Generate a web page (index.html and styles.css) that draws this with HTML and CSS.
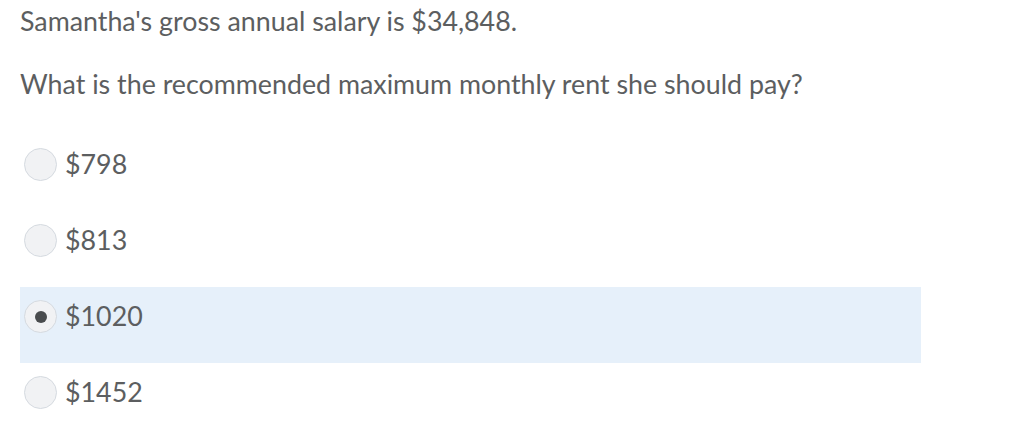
FILE: index.html
```html
<!DOCTYPE html>
<html>
<head>
<meta charset="utf-8">
<link rel="stylesheet" href="styles.css">
</head>
<body>
<div class="question">
  <p class="stem">Samantha's gross annual salary is $34,848.</p>
  <p class="stem">What is the recommended maximum monthly rent she should pay?</p>
  <div class="options">
    <label class="option"><span class="radio"></span><span class="label">$798</span></label>
    <label class="option"><span class="radio"></span><span class="label">$813</span></label>
    <label class="option selected"><span class="radio checked"></span><span class="label">$1020</span></label>
    <label class="option"><span class="radio"></span><span class="label">$1452</span></label>
  </div>
</div>
</body>
</html>
```
FILE: styles.css
```css
html, body {
  margin: 0;
  padding: 0;
  background: #ffffff;
}
body {
  font-family: Lato, "Liberation Sans", sans-serif;
  font-weight: 400;
  color: #5c5e60;
}
.question {
  padding: 0 0 0 20px;
  width: 901px;
}
.stem {
  margin: 0;
  font-size: 26.8px;
  line-height: 32px;
}
.stem:first-child {
  padding-top: 5px;
}
.stem + .stem {
  margin-top: 31px;
}
.options {
  margin-top: 35px;
  display: flex;
  flex-direction: column;
}
.option {
  display: flex;
  align-items: flex-start;
  height: 76px;
  gap: 8px;
  padding-left: 4px;
  box-sizing: border-box;
  padding-top: 13px;
}
.option.selected {
  background: #e6f0fa;
}
.radio {
  box-sizing: border-box;
  flex: none;
  width: 33px;
  height: 33px;
  border-radius: 50%;
  border: 1px solid #d5dae0;
  background: #f1f2f4;
  display: flex;
  align-items: center;
  justify-content: center;
}
.radio.checked::after {
  content: "";
  width: 12px;
  height: 12px;
  border-radius: 50%;
  background: #494c4e;
}
.label {
  font-size: 26.8px;
  line-height: 33px;
}
```
